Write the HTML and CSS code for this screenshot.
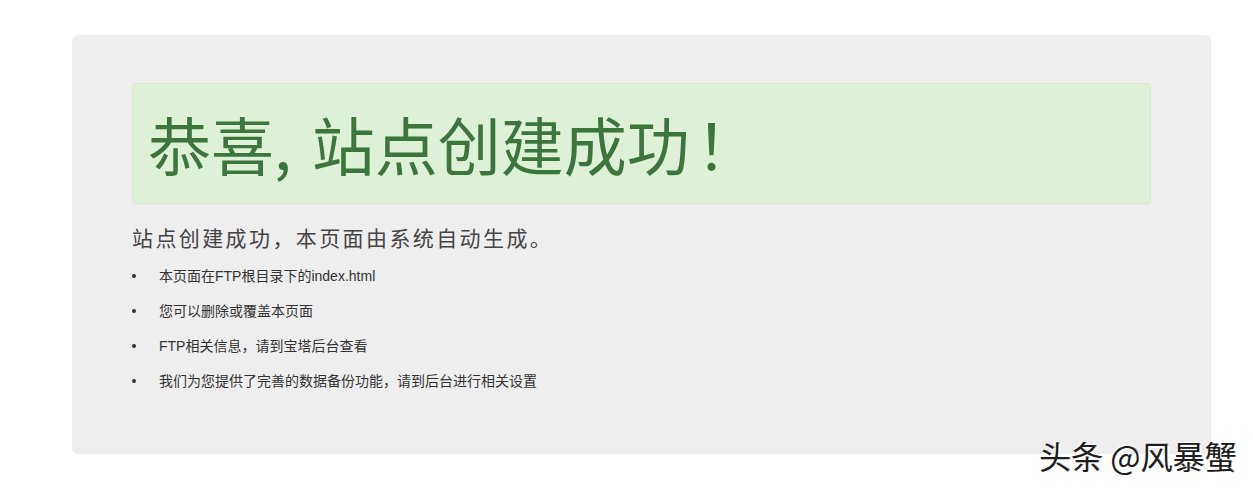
FILE: index.html
```html
<!DOCTYPE html>
<html lang="zh-CN">
<head>
<meta charset="utf-8">
<title>恭喜，站点创建成功！</title>
<link rel="stylesheet" href="styles.css">
</head>
<body>
<div class="page">
  <div class="jumbotron">
    <div class="alert">
      <h1 class="title">恭喜<span class="comma">,</span> 站点创建成功<span class="bang">！</span></h1>
    </div>
    <p class="lead">站点创建成功，本页面由系统自动生成。</p>
    <ul class="tips">
      <li>本页面在FTP根目录下的index.html</li>
      <li>您可以删除或覆盖本页面</li>
      <li>FTP相关信息，请到宝塔后台查看</li>
      <li>我们为您提供了完善的数据备份功能，请到后台进行相关设置</li>
    </ul>
  </div>
</div>
<div class="watermark">头条 @风暴蟹</div>
</body>
</html>
```

FILE: styles.css
```css
html, body {
  margin: 0;
  padding: 0;
  background: #fff;
}

body {
  position: relative;
  width: 1253px;
  height: 488px;
  overflow: hidden;
  font-family: "Liberation Sans", "Noto Sans CJK SC", sans-serif;
  color: #333;
}

.page {
  padding: 35px 0 0 72px;
}

.jumbotron {
  box-sizing: border-box;
  width: 1139px;
  padding: 48px 60px 48px;
  background: #eeeeee;
  border-radius: 6px;
}

.alert {
  box-sizing: border-box;
  width: 1019px;
  padding: 24px 15px 26px;
  background: #dff0d8;
  border: 1px solid #d6e9c6;
  border-radius: 4px;
  box-shadow: 0 1px 1px rgba(0, 0, 0, 0.03);
}

.title {
  margin: 0;
  font-family: "Noto Sans CJK SC", sans-serif;
  font-size: 63px;
  font-weight: 400;
  line-height: 69px;
  color: #3c763d;
  white-space: nowrap;
}

.title .comma {
  margin-right: 6px;
}

.title .bang {
  margin-left: 6px;
}

.lead {
  margin: 18px 0 14px;
  font-family: "Noto Sans CJK SC", sans-serif;
  font-size: 21px;
  line-height: 30px;
  letter-spacing: 2.4px;
  color: #444;
  font-weight: 400;
}

.tips {
  list-style: none;
  margin: 0 0 15px;
  padding: 0;
}

.tips li {
  display: flex;
  align-items: center;
  font-size: 14px;
  line-height: 20px;
  color: #333;
  margin-bottom: 15px;
}

.tips li:last-child {
  margin-bottom: 0;
}

.tips li::before {
  content: "";
  flex: none;
  width: 4px;
  height: 4px;
  margin: 0 23px 0 0;
  border-radius: 50%;
  background: #333;
}

.watermark {
  position: absolute;
  left: 1039px;
  top: 433px;
  font-family: "Noto Sans CJK SC", sans-serif;
  font-size: 32px;
  line-height: 44px;
  color: #1e1e1e;
  white-space: nowrap;
  text-shadow: 2px 2px 0 #ffffff, -1px -1px 0 #ffffff, 1px 0 0 #999999;
}
```
